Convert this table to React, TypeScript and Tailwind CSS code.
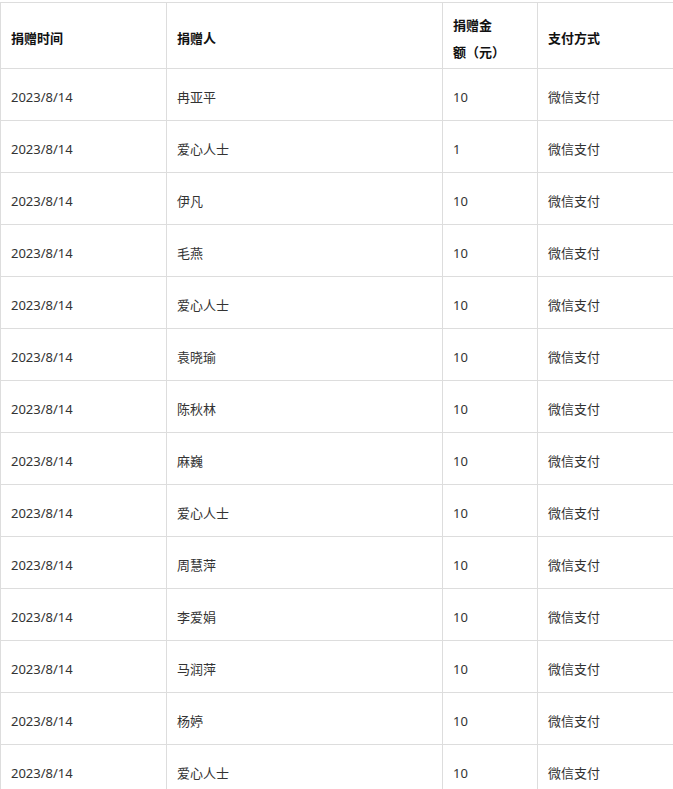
const donors = [
  { name: "冉亚平", amount: "10" },
  { name: "爱心人士", amount: "1" },
  { name: "伊凡", amount: "10" },
  { name: "毛燕", amount: "10" },
  { name: "爱心人士", amount: "10" },
  { name: "袁晓瑜", amount: "10" },
  { name: "陈秋林", amount: "10" },
  { name: "麻巍", amount: "10" },
  { name: "爱心人士", amount: "10" },
  { name: "周慧萍", amount: "10" },
  { name: "李爱娟", amount: "10" },
  { name: "马润萍", amount: "10" },
  { name: "杨婷", amount: "10" },
  { name: "爱心人士", amount: "10" },
];

const cell = "border border-[#dddddd] px-[10px] pt-[8px] pb-[2px] text-left align-middle";

export default function App() {
  return (
    <div className="h-[789px] overflow-hidden bg-white pt-[2px] font-['Noto_Sans','Noto_Sans_CJK_SC',sans-serif] text-[13px] leading-[27px]">
      <table className="w-[760px] table-fixed border-collapse">
        <colgroup>
          <col className="w-[166px]" />
          <col className="w-[276px]" />
          <col className="w-[95px]" />
          <col />
        </colgroup>
        <thead>
          <tr className="h-[66px] font-bold text-[#111]">
            <th className={cell}>捐赠时间</th>
            <th className={cell}>捐赠人</th>
            <th className={cell}>
              捐赠金
              <br />
              额（元）
            </th>
            <th className={cell}>支付方式</th>
          </tr>
        </thead>
        <tbody className="text-[#333]">
          {donors.map((d, i) => (
            <tr key={i} className="h-[52px]">
              <td className={cell}>2023/8/14</td>
              <td className={cell}>{d.name}</td>
              <td className={cell}>{d.amount}</td>
              <td className={cell}>微信支付</td>
            </tr>
          ))}
        </tbody>
      </table>
    </div>
  );
}
